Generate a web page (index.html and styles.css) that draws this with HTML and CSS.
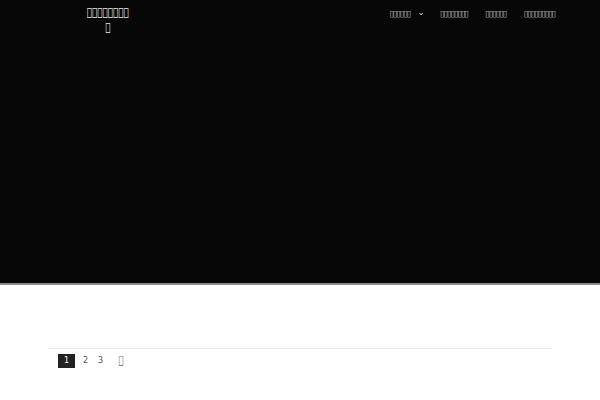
FILE: index.html
```html
<!DOCTYPE html>
<html>
<head>
<meta charset="utf-8">
<link rel="stylesheet" href="styles.css">
</head>
<body>
<div class="hero">
  <header class="header">
    <div class="logo">&#xE001;&#xE002;&#xE003;&#xE004;&#xE005;&#xE006;&#xE007;&#xE008;&#xE009;</div>
    <nav class="nav">
      <a class="nav-item">&#xE001;&#xE002;&#xE003;&#xE004;&#xE005;&#xE006;<svg class="chev" viewBox="0 0 8 5" width="5" height="4"><path d="M1 1 L4 4 L7 1" fill="none" stroke="#eee" stroke-width="1.6"/></svg></a>
      <a class="nav-item">&#xE001;&#xE002;&#xE003;&#xE004;&#xE005;&#xE006;&#xE007;&#xE008;</a>
      <a class="nav-item">&#xE001;&#xE002;&#xE003;&#xE004;&#xE005;&#xE006;</a>
      <a class="nav-item">&#xE001;&#xE002;&#xE003;&#xE004;&#xE005;&#xE006;&#xE007;&#xE008;&#xE009;</a>
    </nav>
  </header>
</div>
<main class="content">
  <div class="pager">
    <span class="page current">1</span>
    <a class="page">2</a>
    <a class="page">3</a>
    <a class="page next"><span class="next-glyph">&#xE00B;</span></a>
  </div>
</main>
</body>
</html>
```

FILE: styles.css
```css
html, body {
  margin: 0;
  padding: 0;
  background: #fff;
  font-family: "DejaVu Sans", sans-serif;
}
.hero {
  height: 283px;
  background: #070707;
  border-bottom: 2px solid #8a8a8a;
}
.header {
  display: flex;
  justify-content: space-between;
  align-items: flex-start;
  padding: 5px 44px 0 80px;
}
.logo {
  width: 56px;
  color: #e8e8e8;
  font-size: 11.5px;
  line-height: 15px;
  text-align: center;
  word-break: break-all;
  line-break: anywhere;
  transform: scaleX(0.76);
  transform-origin: center top;
}
.nav {
  display: flex;
  gap: 21.5px;
  padding-top: 4px;
  transform: scaleX(0.81);
  transform-origin: right top;
}
.nav-item {
  color: #f4f4f4;
  font-size: 7.2px;
  line-height: 10px;
  display: flex;
  align-items: center;
  gap: 10px;
}
.content {
  padding: 63px 48px 0;
}
.pager {
  border-top: 1px solid #eeeeee;
  padding: 5px 10px 0;
  display: flex;
  align-items: center;
}
.page {
  font-size: 8px;
  color: #555;
  height: 14px;
  line-height: 14px;
  min-width: 15px;
  text-align: center;
}
.page.current {
  background: #222;
  color: #fff;
  min-width: 17px;
  margin-right: 3px;
}
.next {
  margin-left: 6px;
  color: #666;
  font-size: 11px;
}
.next-glyph {
  display: inline-block;
  transform: scaleX(0.75);
}
```
